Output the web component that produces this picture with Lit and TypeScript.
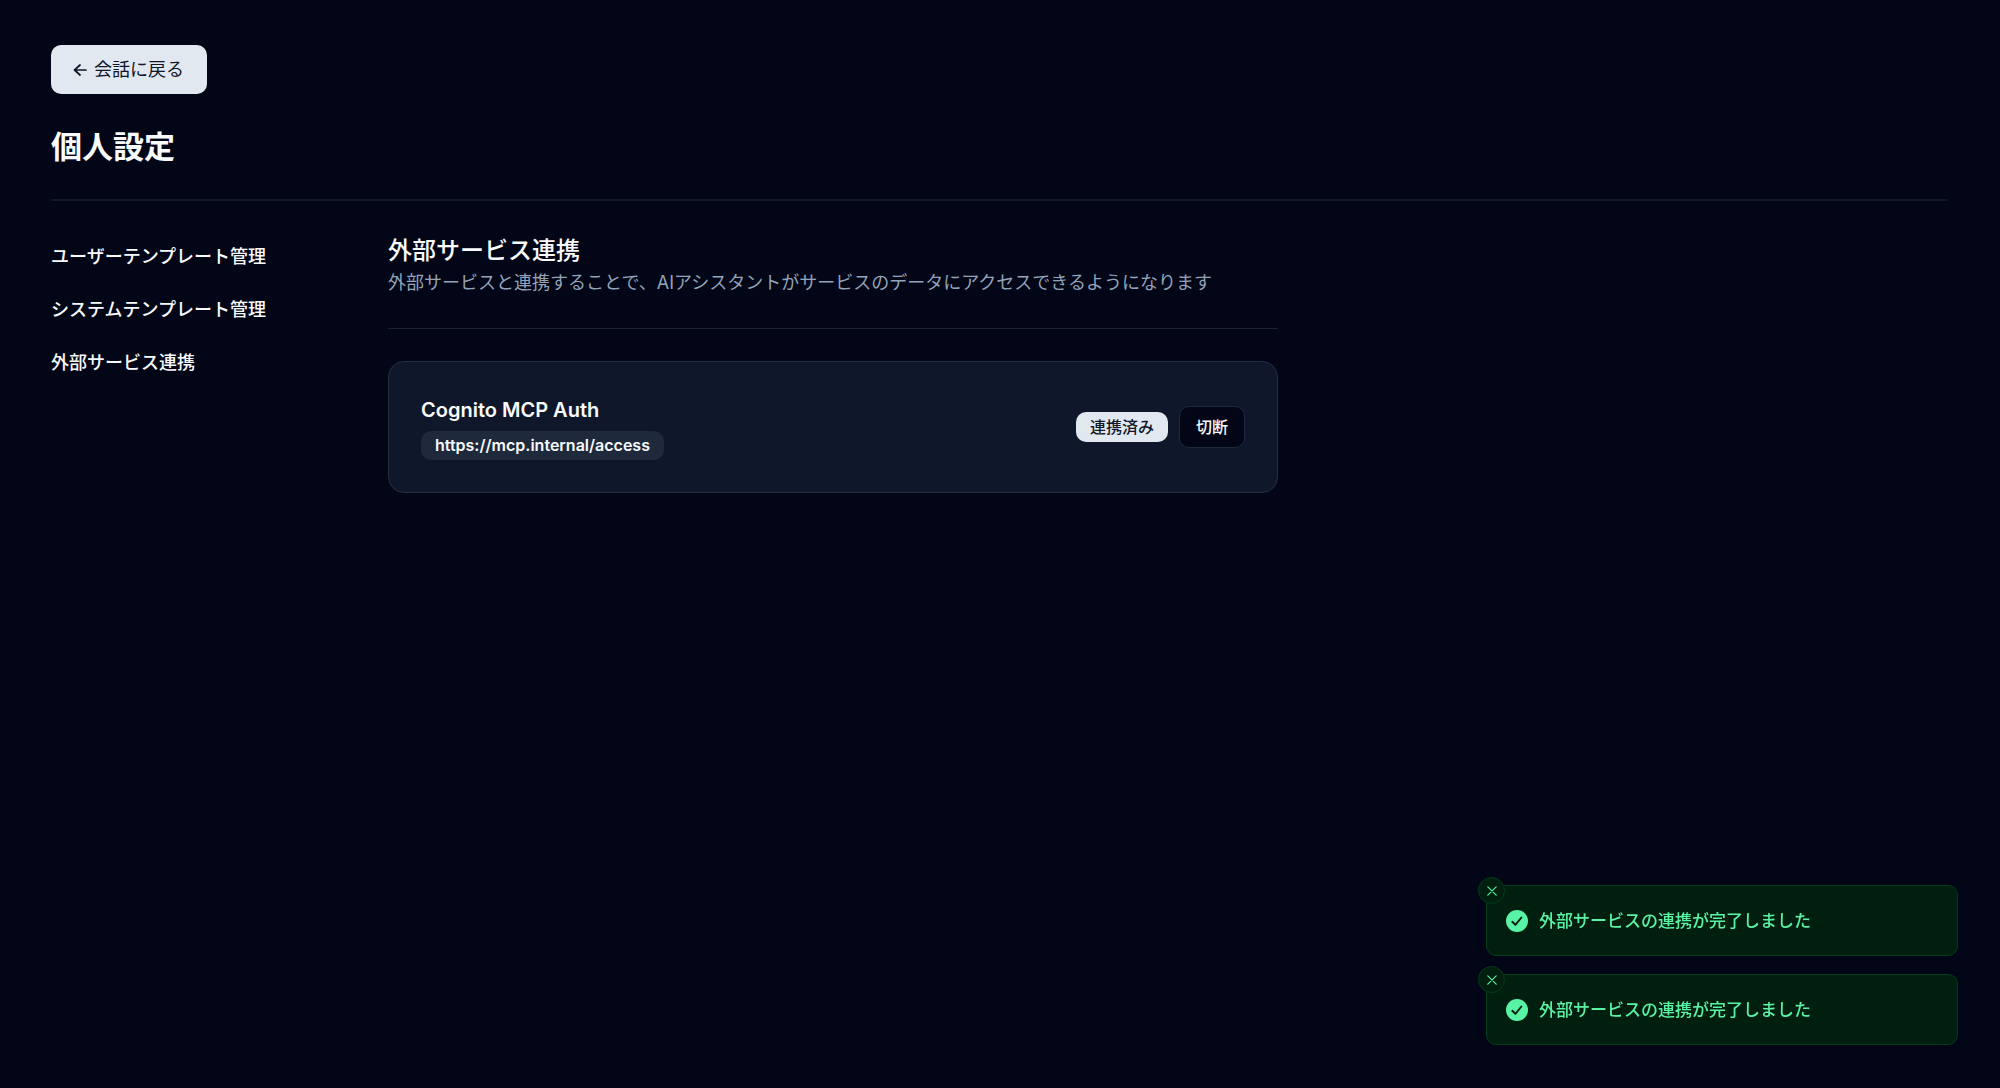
import { LitElement, html, css, svg } from "lit";
import { customElement, property, state } from "lit/decorators.js";

const arrowLeft = svg`<path d="M7 1 L1.5 6 L7 11 M1.5 6 H13" />`;

@customElement("toast-message")
export class ToastMessage extends LitElement {
  @property() message = "";

  static styles = css`
    :host {
      display: block;
    }
    .toast {
      position: relative;
      display: flex;
      align-items: center;
      gap: 11px;
      box-sizing: border-box;
      min-height: 71px;
      padding: 21px 19px;
      border: 1px solid #003d1c;
      border-radius: 10px;
      background: #001f0f;
      color: #59f3a6;
      font-size: 17px;
      line-height: 26px;
      font-weight: 500;
      box-shadow: 0 4px 12px rgba(0, 0, 0, 0.1);
    }
    .mark {
      flex: none;
      display: block;
      width: 22px;
      height: 22px;
    }
    .close {
      position: absolute;
      top: -9px;
      left: -9px;
      display: flex;
      align-items: center;
      justify-content: center;
      box-sizing: border-box;
      width: 27px;
      height: 27px;
      padding: 0;
      border: 1px solid #003d1c;
      border-radius: 50%;
      background: #001f0f;
      color: inherit;
      cursor: pointer;
    }
    .close svg {
      width: 10px;
      height: 10px;
      fill: none;
      stroke: currentColor;
      stroke-width: 1.2;
      stroke-linecap: round;
    }
  `;

  private close() {
    this.dispatchEvent(new CustomEvent("dismiss"));
  }

  render() {
    return html`
      <div class="toast" role="status">
        <button class="close" type="button" aria-label="Close" @click=${this.close}>
          <svg viewBox="0 0 10 10" aria-hidden="true"><path d="M0.8 0.8 L9.2 9.2 M9.2 0.8 L0.8 9.2" /></svg>
        </button>
        <svg class="mark" viewBox="0 0 22 22" aria-hidden="true">
          <circle cx="11" cy="11" r="11" fill="#59f3a6" />
          <path d="M6.3 11.8 L9.4 14.8 L15.4 7.5" fill="none" stroke="#001f0f" stroke-width="1.9" stroke-linecap="round" stroke-linejoin="round" />
        </svg>
        <span>${this.message}</span>
      </div>
    `;
  }
}

@customElement("service-card")
export class ServiceCard extends LitElement {
  @property() name = "";
  @property() url = "";

  static styles = css`
    :host {
      display: block;
    }
    .card {
      display: flex;
      align-items: center;
      justify-content: space-between;
      gap: 24px;
      padding: 32px;
      border: 1px solid #242f42;
      border-radius: 16px;
      background: #0f172a;
    }
    .info {
      display: flex;
      flex-direction: column;
      align-items: flex-start;
      gap: 4px;
    }
    .name {
      margin: 0;
      font-size: 20px;
      line-height: 33px;
      font-weight: 600;
    }
    .chip {
      padding: 0 14px;
      border-radius: 10px;
      font-size: 16px;
      line-height: 29px;
      font-weight: 600;
      background: #1e293b;
    }
    .actions {
      display: flex;
      align-items: center;
      gap: 11px;
    }
    .badge {
      padding: 0 14px;
      border-radius: 10px;
      background: #e2e8f0;
      color: #0f172a;
      font-size: 16px;
      line-height: 30px;
      font-weight: 500;
    }
    .disconnect {
      padding: 0 16px;
      border: 1px solid #1e293b;
      border-radius: 10px;
      background: #020617;
      color: inherit;
      font: inherit;
      font-size: 16px;
      line-height: 40px;
      font-weight: 500;
      cursor: pointer;
    }
  `;

  render() {
    return html`
      <article class="card">
        <div class="info">
          <h3 class="name">${this.name}</h3>
          <span class="chip">${this.url}</span>
        </div>
        <div class="actions">
          <span class="badge">連携済み</span>
          <button class="disconnect" type="button">切断</button>
        </div>
      </article>
    `;
  }
}

@customElement("app-root")
export class AppRoot extends LitElement {
  @state() private toasts = [1, 2];

  private nav = ["ユーザーテンプレート管理", "システムテンプレート管理", "外部サービス連携"];

  static styles = css`
    :host {
      display: block;
      box-sizing: border-box;
      min-height: 100vh;
      padding: 45px 53px 45px 51px;
      background: #020617;
      color: #f8fafc;
      font-family: Inter, "Noto Sans CJK JP", sans-serif;
    }
    .back {
      display: inline-flex;
      align-items: center;
      gap: 6px;
      padding: 0 23px 0 22px;
      border-radius: 10px;
      background: #e2e8f0;
      color: #0f172a;
      font-size: 18px;
      line-height: 49px;
      text-decoration: none;
    }
    .back svg {
      width: 15px;
      height: 12px;
      fill: none;
      stroke: currentColor;
      stroke-width: 1.7;
      stroke-linecap: round;
      stroke-linejoin: round;
    }
    .title {
      margin: 32px 0 0;
      font-size: 31px;
      line-height: 42px;
      font-weight: 700;
    }
    .rule {
      height: 1px;
      margin: 0;
      border: 0;
      background: #1a2335;
    }
    .rule.top {
      height: 2px;
      margin: 31px 0 32px;
      background: #111829;
    }
    .layout {
      display: grid;
      grid-template-columns: 305px minmax(0, 890px);
      column-gap: 32px;
    }
    .nav {
      display: flex;
      flex-direction: column;
      gap: 5px;
    }
    .nav a {
      color: inherit;
      font-size: 18px;
      line-height: 48px;
      font-weight: 500;
      text-decoration: none;
    }
    .heading {
      margin: 0;
      font-size: 24px;
      line-height: 36px;
      font-weight: 500;
    }
    .lead {
      margin: 0 0 31px;
      color: #94a3b8;
      font-size: 18px;
      line-height: 28px;
    }
    service-card {
      margin-top: 32px;
    }
    .toasts {
      position: fixed;
      right: 42px;
      bottom: 43px;
      display: flex;
      flex-direction: column;
      gap: 18px;
      width: 472px;
      max-width: calc(100vw - 84px);
    }
  `;

  private dismiss(id: number) {
    this.toasts = this.toasts.filter((t) => t !== id);
  }

  render() {
    return html`
      <header>
        <a class="back" href="#"><svg viewBox="0 0 15 12" aria-hidden="true">${arrowLeft}</svg>会話に戻る</a>
        <h1 class="title">個人設定</h1>
      </header>
      <hr class="rule top" />
      <div class="layout">
        <nav class="nav">${this.nav.map((label) => html`<a href="#">${label}</a>`)}</nav>
        <main>
          <h2 class="heading">外部サービス連携</h2>
          <p class="lead">外部サービスと連携することで、AIアシスタントがサービスのデータにアクセスできるようになります</p>
          <hr class="rule" />
          <service-card name="Cognito MCP Auth" url="https://mcp.internal/access"></service-card>
        </main>
      </div>
      <section class="toasts">
        ${this.toasts.map(
          (id) => html`<toast-message message="外部サービスの連携が完了しました" @dismiss=${() => this.dismiss(id)}></toast-message>`,
        )}
      </section>
    `;
  }
}
